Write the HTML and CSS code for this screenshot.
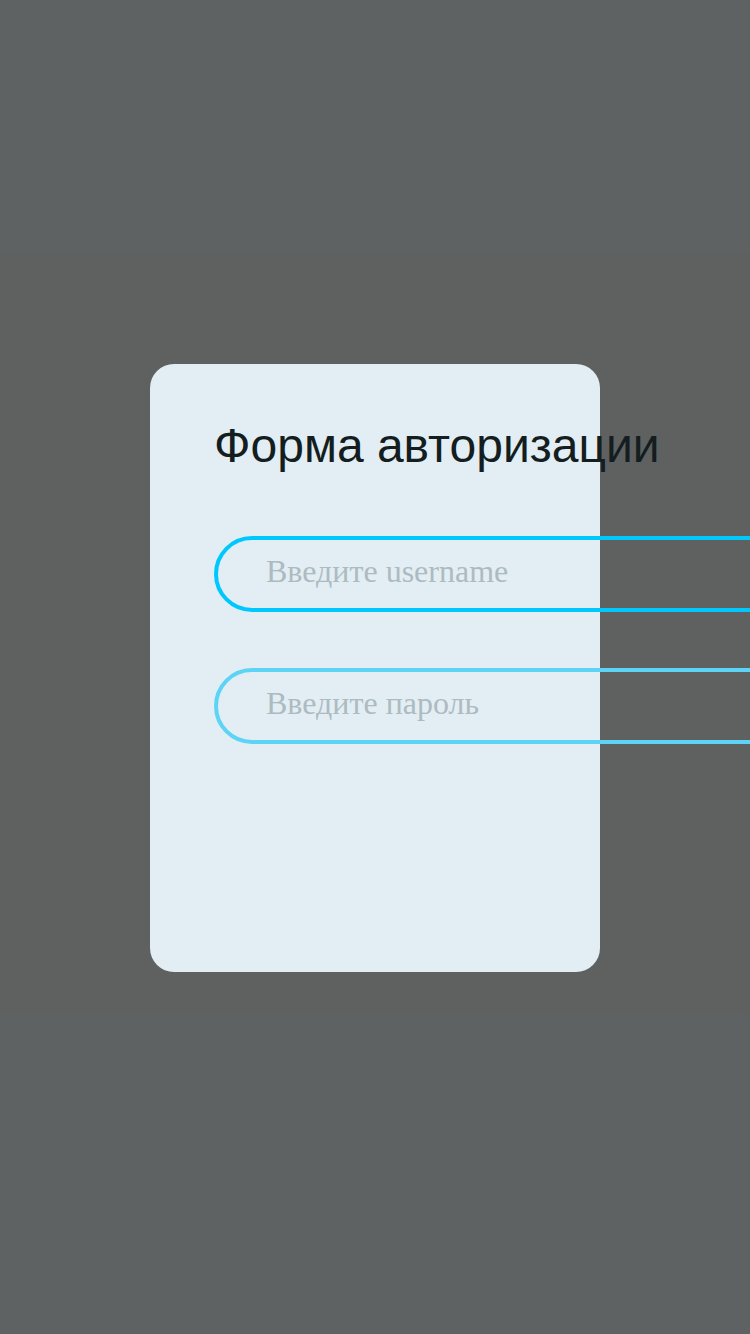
FILE: index.html
```html
<!DOCTYPE html>
<html lang="ru">
<head>
  <meta charset="utf-8">
  <meta name="viewport" content="width=device-width, initial-scale=1">
  <title>Форма авторизации</title>
  <link rel="stylesheet" href="styles.css">
</head>
<body class="page">
  <main class="overlay">
    <form class="card">
      <h1 class="title">Форма авторизации</h1>
      <div class="fields">
        <input class="field field-active" type="text" name="username" placeholder="Введите username" aria-label="Введите username">
        <input class="field" type="password" name="password" placeholder="Введите пароль" aria-label="Введите пароль">
      </div>
    </form>
  </main>
</body>
</html>
```

FILE: styles.css
```css
* {
  box-sizing: border-box;
}

.page {
  margin: 0;
}

.overlay {
  display: flex;
  align-items: center;
  justify-content: center;
  min-height: 100vh;
  padding-top: 2px;
  overflow: hidden;
  background: linear-gradient(#5e6262 19%, #5f6160 19%, #5f6160 76%, #5e6262 76%);
}

.card {
  width: 60%;
  min-height: 608px;
  padding: 56px 64px;
  border-radius: 24px;
  background: #e2eef3;
}

.title {
  margin: 0 0 64px;
  color: #141d20;
  font: 400 48px/52px "Liberation Sans", Arial, sans-serif;
  white-space: nowrap;
}

.fields {
  display: flex;
  flex-direction: column;
  gap: 56px;
}

.field {
  width: 600px;
  height: 76px;
  padding: 0 48px 6px;
  border: 4px solid #5dd4f5;
  border-radius: 38px;
  outline: none;
  background: transparent;
  color: #141d20;
  font: 32px "Liberation Serif", "Times New Roman", serif;
}

.field-active,
.field:focus {
  border-color: #00c8ff;
}

.field::placeholder {
  color: #adbbc1;
  opacity: 1;
}
```
